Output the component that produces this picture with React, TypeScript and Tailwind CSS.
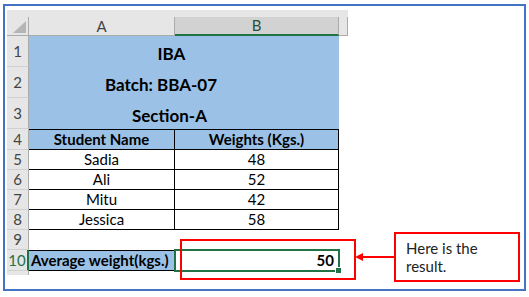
import React from 'react';

const FONT = { fontFamily: 'Lato, "Liberation Sans", sans-serif' };

const students = [
  { n: 5, name: 'Sadia', w: 48 },
  { n: 6, name: 'Ali', w: 52 },
  { n: 7, name: 'Mitu', w: 42 },
  { n: 8, name: 'Jessica', w: 58 },
];

const RowHead: React.FC<{ n: number | string; active?: boolean }> = ({ n, active }) => (
  <div
    className={`w-[22px] shrink-0 bg-[#e6e6e6] border-b border-[#d0d0d0] flex items-center justify-center text-[15px] ${
      active ? 'text-[#217346] border-r-2 border-r-[#217346]' : 'text-[#444] border-r border-r-[#ababab]'
    }`}
  >
    {n}
  </div>
);

export default function App() {
  return (
    <div className="relative w-[529px] h-[297px] bg-white pt-[4px] pl-[3px]" style={FONT}>
      <div className="w-[523px] h-[287px] border-2 border-[#4472c4] pl-[2px] pt-[4px] text-black">
        {/* column headers */}
        <div className="flex h-[26px] w-[341px] bg-[#e6e6e6] items-end">
          <div className="w-[22px] h-[19px] border-r border-b border-[#ababab] flex items-end justify-end pr-[2px] pb-[2px]">
            <svg width="13" height="12" viewBox="0 0 13 12">
              <polygon points="13,0 13,12 0,12" fill="#b5b5b5" />
            </svg>
          </div>
          <div className="w-[146px] h-[19px] border-b border-r border-[#ababab] flex items-center justify-center text-[15px] text-[#444]">
            A
          </div>
          <div className="w-[164px] h-[19px] bg-[#d2d2d2] border-r border-[#ababab] border-b-2 border-b-[#217346] flex items-center justify-center text-[15px] text-[#2a4f3a]">
            B
          </div>
          <div className="w-[9px] h-[19px] border-b border-r border-[#ababab]" />
        </div>

        {/* title rows */}
        {[
          { n: 1, t: 'IBA', pr: 'pr-[25px]' },
          { n: 2, t: 'Batch: BBA-07', pr: 'pr-[46px]' },
          { n: 3, t: 'Section-A', pr: 'pr-[29px]' },
        ].map((r) => (
          <div key={r.n} className="flex h-[31px]">
            <RowHead n={r.n} />
            <div className={`w-[310px] bg-[#9bc2e6] flex items-center justify-center pt-[5px] font-bold text-[17px] ${r.pr}`}>
              {r.t}
            </div>
          </div>
        ))}

        {/* table header */}
        <div className="flex h-[21px]">
          <RowHead n={4} />
          <div className="w-[146px] bg-[#9bc2e6] border-t border-b border-r border-black flex items-center justify-center font-bold text-[15px]">
            Student Name
          </div>
          <div className="w-[164px] bg-[#9bc2e6] border-t border-b border-r border-black flex items-center justify-center font-bold text-[15px]">
            Weights (Kgs.)
          </div>
        </div>

        {students.map((s) => (
          <div key={s.n} className="flex h-[20px]">
            <RowHead n={s.n} />
            <div className="w-[146px] border-b border-r border-black flex items-center justify-center text-[15px]">
              {s.name}
            </div>
            <div className="w-[164px] border-b border-r border-black flex items-center justify-center text-[15px]">
              {s.w}
            </div>
          </div>
        ))}

        <div className="flex h-[20px]">
          <RowHead n={9} />
        </div>

        <div className="flex h-[21px]">
          <RowHead n={10} active />
          <div className="w-[146px] bg-[#9bc2e6] border-t border-b border-black flex items-center pl-[2px] font-bold text-[15px] whitespace-nowrap">
            Average weight(kgs.)
          </div>
          <div className="w-[164px] border-t border-b border-black flex items-center justify-end pr-[5px] font-bold text-[15px]">
            50
          </div>
        </div>

        <div className="flex h-[4px]">
          <div className="w-[22px] bg-[#e6e6e6] border-r border-[#ababab]" />
        </div>
      </div>

      {/* selection of B10 */}
      <div className="absolute left-[174px] top-[249px] w-[166px] h-[23px] border-2 border-[#217346]" />
      <div className="absolute left-[335px] top-[267px] w-[7px] h-[7px] bg-[#217346] border border-white" />

      {/* callout */}
      <div className="absolute left-[180px] top-[239px] w-[176px] h-[41px] border-2 border-[#ff0000]" />
      <svg className="absolute left-[354px] top-[250px]" width="42" height="14" viewBox="0 0 42 14">
        <line x1="8" y1="7" x2="42" y2="7" stroke="#ff0000" strokeWidth="2" />
        <polygon points="1,7 9,3 9,11" fill="#ff0000" />
      </svg>
      <div className="absolute left-[394px] top-[232px] w-[126px] h-[50px] border-2 border-[#ff0000] bg-white pl-[10px] pt-[5px] text-[15px] leading-[18px] text-[#222]">
        Here is the
        <br />
        result.
      </div>
    </div>
  );
}
